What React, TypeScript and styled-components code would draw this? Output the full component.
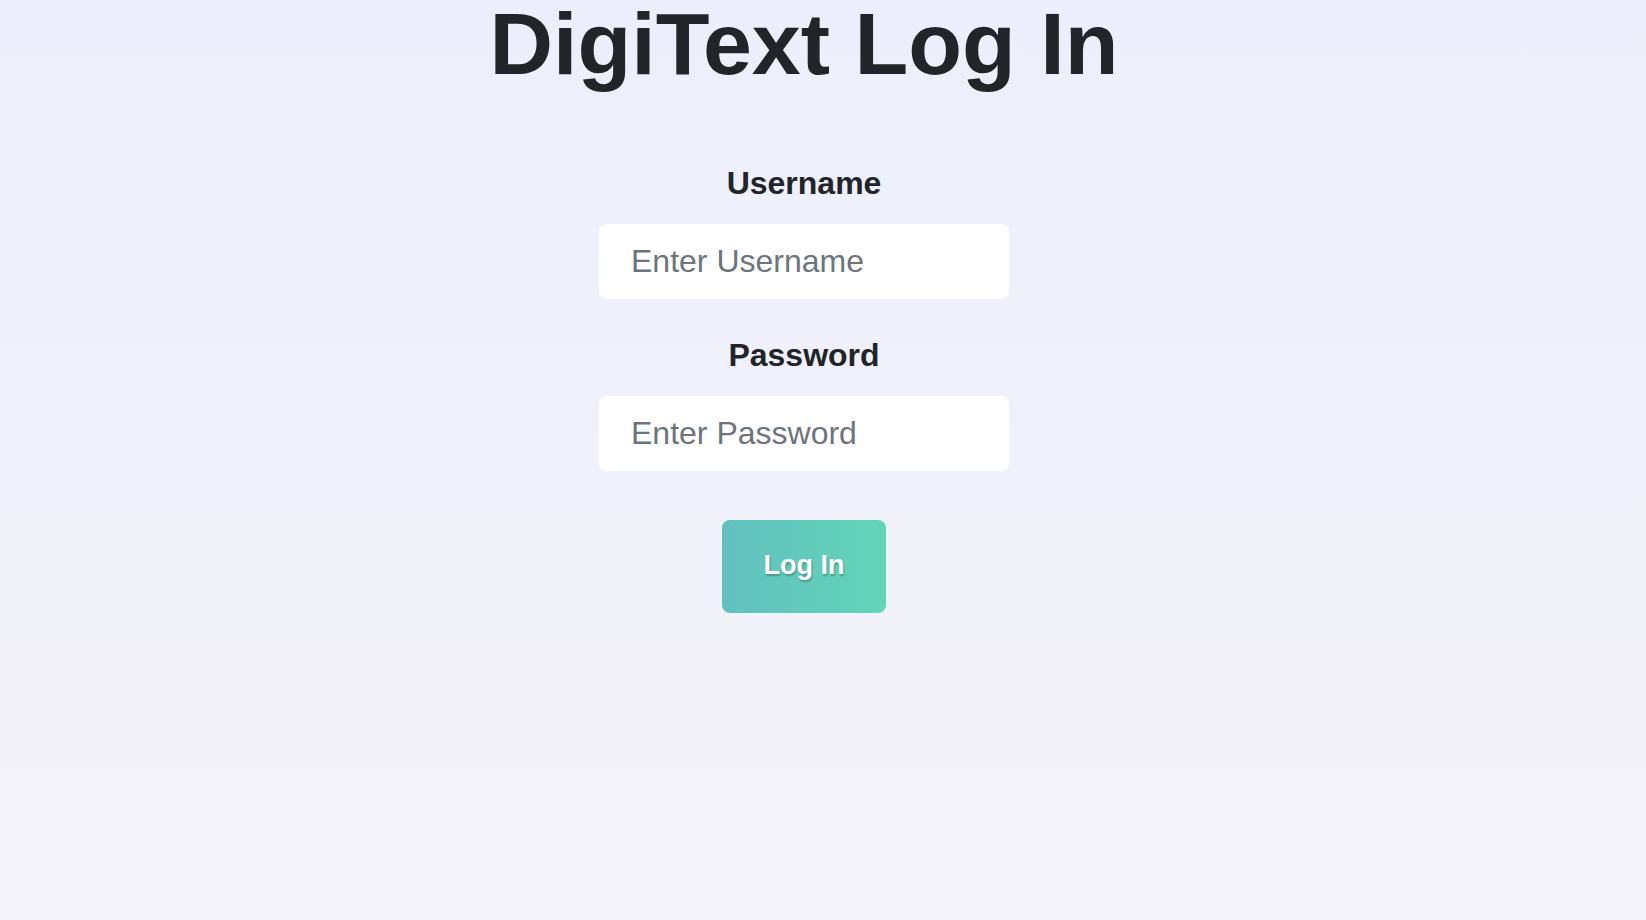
import React from 'react'
import styled, { createGlobalStyle } from 'styled-components'

const GlobalStyle = createGlobalStyle`
  html, body {
    margin: 0;
    padding: 0;
  }
  body {
    font-family: "Liberation Sans", Arial, Helvetica, sans-serif;
    color: #212529;
    background: linear-gradient(180deg, #eceffb 0%, #f5f3fa 100%);
    min-height: 100vh;
  }
`

const Page = styled.div`
  box-sizing: border-box;
  min-height: 100vh;
  padding: 0 38px 0 0;
  display: flex;
  flex-direction: column;
  align-items: center;
`

const Title = styled.h1`
  margin: 0;
  font-size: 88px;
  line-height: 1;
  font-weight: 700;
  color: #212529;
`

const Form = styled.form`
  display: flex;
  flex-direction: column;
  align-items: center;
  margin-top: 77px;
`

const Label = styled.label<{ $gap?: number }>`
  display: block;
  margin-top: ${(p) => p.$gap || 0}px;
  font-size: 32px;
  line-height: 36px;
  font-weight: 700;
  color: #212529;
`

const Input = styled.input`
  box-sizing: border-box;
  width: 410px;
  height: 75px;
  margin-top: 23px;
  padding: 0 32px;
  border: none;
  border-radius: 8px;
  background: #fff;
  font-family: inherit;
  font-size: 32px;
  color: #212529;
  outline: none;
  &::placeholder {
    color: #6c757d;
  }
`

const Button = styled.button`
  width: 164px;
  height: 93px;
  margin-top: 49px;
  padding: 0 0 2px;
  border: none;
  border-radius: 8px;
  background: linear-gradient(90deg, #62c0bf 0%, #62d5b8 100%);
  color: #fff;
  font-family: inherit;
  font-size: 27px;
  font-weight: 700;
  text-shadow: 1px 2px 2px rgba(0, 0, 0, 0.25);
  cursor: pointer;
`

export default function App() {
  return (
    <>
      <GlobalStyle />
      <Page>
        <Title>DigiText Log In</Title>
        <Form onSubmit={(e) => e.preventDefault()}>
          <Label htmlFor="username">Username</Label>
          <Input id="username" type="text" placeholder="Enter Username" />
          <Label htmlFor="password" $gap={38}>
            Password
          </Label>
          <Input id="password" type="password" placeholder="Enter Password" />
          <Button type="submit">Log In</Button>
        </Form>
      </Page>
    </>
  )
}
